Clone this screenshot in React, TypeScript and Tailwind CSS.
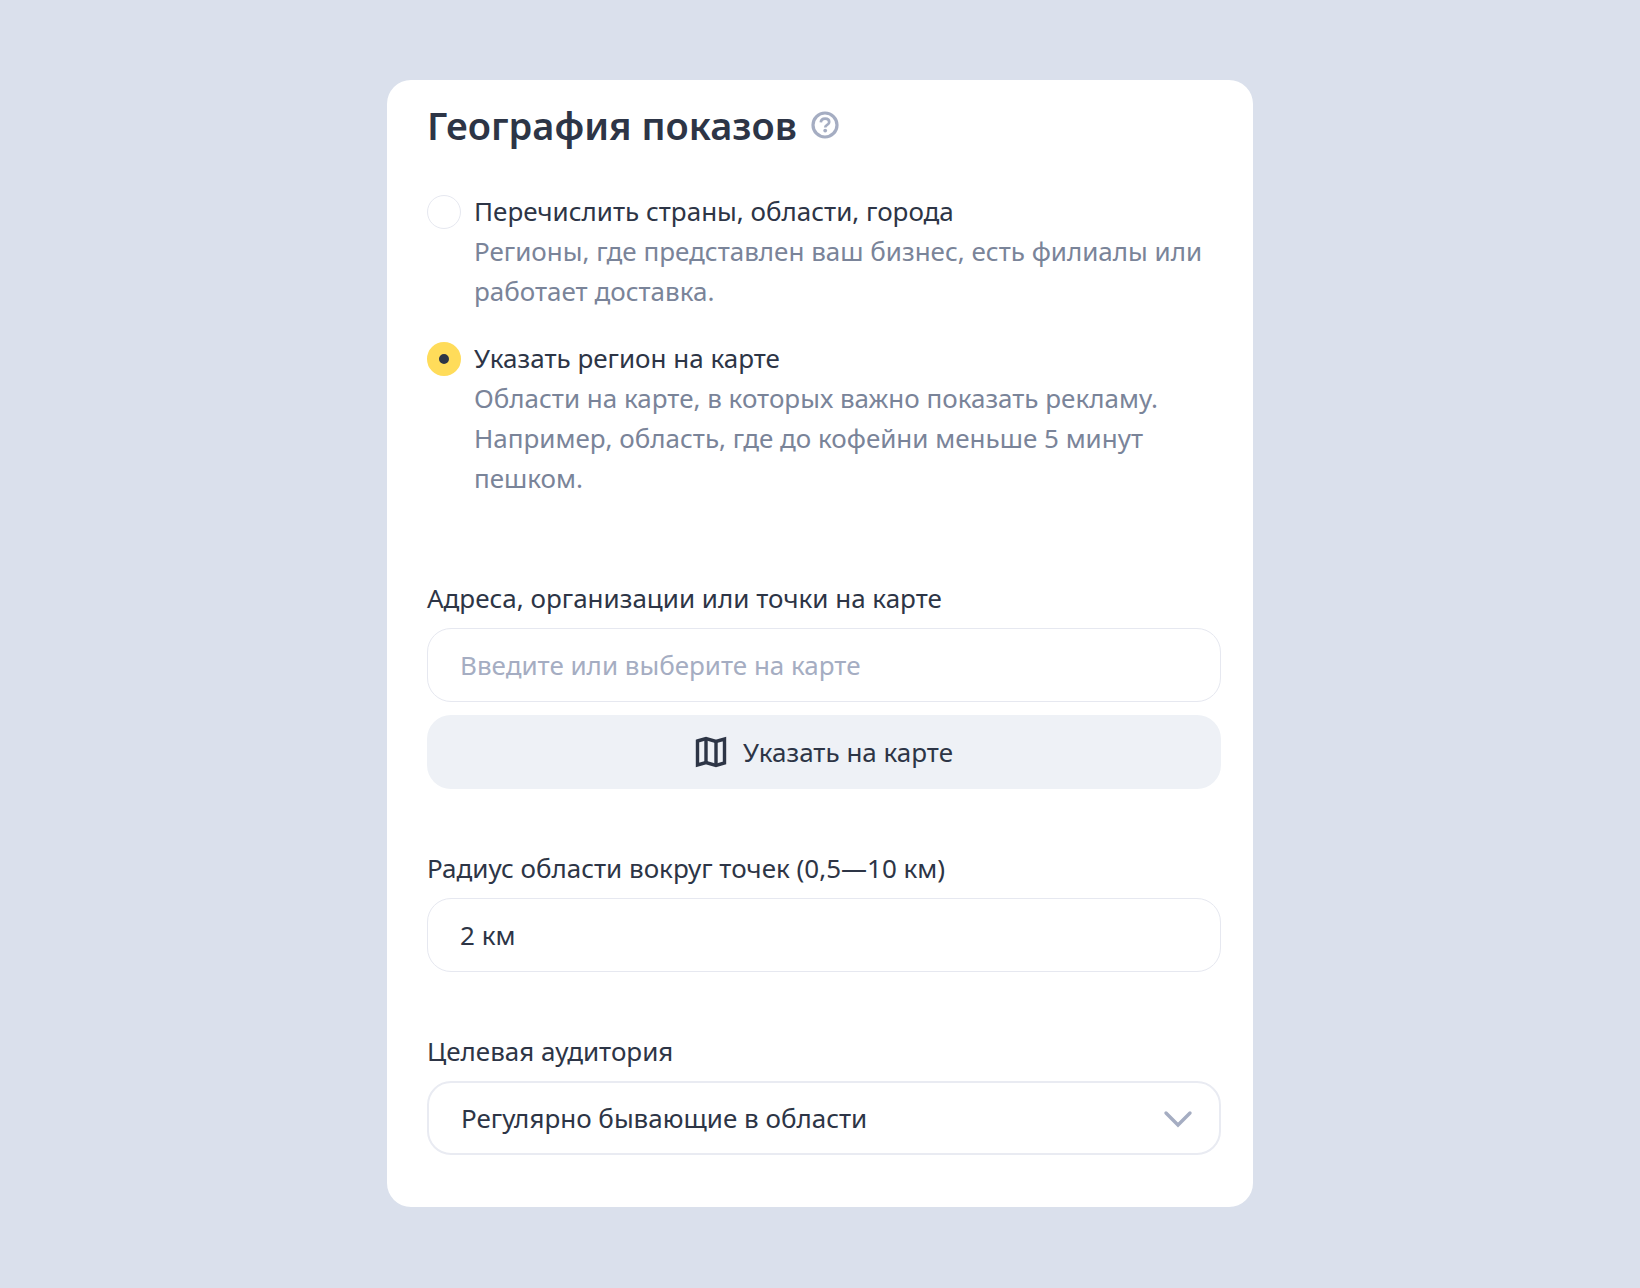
import React, { useState } from 'react';

const regionModes = [
  {
    id: 'list',
    title: 'Перечислить страны, области, города',
    description: 'Регионы, где представлен ваш бизнес, есть филиалы или работает доставка.',
  },
  {
    id: 'map',
    title: 'Указать регион на карте',
    description:
      'Области на карте, в которых важно показать рекламу. Например, область, где до кофейни меньше 5 минут пешком.',
  },
];

function HelpIcon() {
  return (
    <svg width="28" height="28" viewBox="0 0 28 28" fill="none" stroke="#a5adc2" aria-hidden="true">
      <circle cx="14" cy="14" r="12" strokeWidth="3.2" />
      <path
        d="M9.8 11.4c.2-2.4 1.9-3.8 4.300-3.800 2.400 0 4.100 1.300 4.100 3.300 0 1.500-.8 2.300-2 3-1.300.8-2 1.200-2 2.600"
        strokeWidth="2.7"
      />
      <circle cx="14.2" cy="19.6" r="1.9" fill="#a5adc2" stroke="none" />
    </svg>
  );
}

function MapIcon() {
  return (
    <svg width="32" height="32" viewBox="0 0 32 32" fill="none" stroke="#2d3546" strokeWidth="3.4" aria-hidden="true">
      <path d="M2.500 5 11 2.500 21 5.500 29.500 3V27L21 29.500 11 26.500 2.500 29Z" />
      <path d="M11 2.500V26.500M21 5.500V29.500" />
    </svg>
  );
}

function ChevronIcon() {
  return (
    <svg
      className="pointer-events-none absolute right-7 top-7"
      width="30"
      height="20"
      viewBox="0 0 30 20"
      fill="none"
      stroke="#a5adc2"
      strokeWidth="3.4"
      strokeLinecap="round"
      aria-hidden="true"
    >
      <path d="M3 4 15 16 27 4" />
    </svg>
  );
}

export default function App() {
  const [mode, setMode] = useState('map');

  return (
    <main className="flex min-h-screen items-start justify-center bg-[#dae0ec] py-20 font-['Noto_Sans',sans-serif] text-[26px] leading-10 text-[#2d3546]">
      <form className="w-full max-w-[866px] rounded-3xl bg-white pt-[21px] pr-8 pb-[52px] pl-10">
        <div className="flex items-center gap-3.5">
          <h1 className="text-[38px] leading-12 font-semibold">География показов</h1>
          <button type="button" aria-label="Справка">
            <HelpIcon />
          </button>
        </div>

        <div className="mt-[42px] flex flex-col gap-[27px]">
          {regionModes.map((item) => (
            <div key={item.id} className="flex items-start gap-[13px]">
              <input
                id={item.id}
                type="radio"
                name="mode"
                checked={mode === item.id}
                onChange={() => setMode(item.id)}
                className="mt-1 size-[34px] shrink-0 appearance-none rounded-full border border-[#e6e8f0] bg-white checked:border-12 checked:border-[#ffdc5a] checked:bg-[#2d3546]"
              />
              <div>
                <label htmlFor={item.id} className="block">
                  {item.title}
                </label>
                <p className="text-[#7a8499]">{item.description}</p>
              </div>
            </div>
          ))}
        </div>

        <div className="mt-20 flex flex-col">
          <label htmlFor="address">Адреса, организации или точки на карте</label>
          <input
            id="address"
            type="text"
            placeholder="Введите или выберите на карте"
            className="mt-2.5 h-[74px] w-full rounded-3xl border border-[#e6e8f0] px-8 placeholder:text-[#a5adc2]"
          />
          <button type="button" className="mt-[13px] flex h-[74px] items-center justify-center gap-4 rounded-3xl bg-[#eef1f6]">
            <MapIcon />
            Указать на карте
          </button>
        </div>

        <div className="mt-[59px] flex flex-col">
          <label htmlFor="radius">Радиус области вокруг точек (0,5—10 км)</label>
          <input
            id="radius"
            type="text"
            defaultValue="2 км"
            className="mt-2.5 h-[74px] w-full rounded-3xl border border-[#e6e8f0] px-8"
          />
        </div>

        <div className="mt-[59px] flex flex-col">
          <label htmlFor="audience">Целевая аудитория</label>
          <div className="relative mt-2.5">
            <select id="audience" className="h-[74px] w-full appearance-none rounded-3xl border-2 border-[#e9ebf2] bg-white px-8">
              <option>Регулярно бывающие в области</option>
            </select>
            <ChevronIcon />
          </div>
        </div>
      </form>
    </main>
  );
}
